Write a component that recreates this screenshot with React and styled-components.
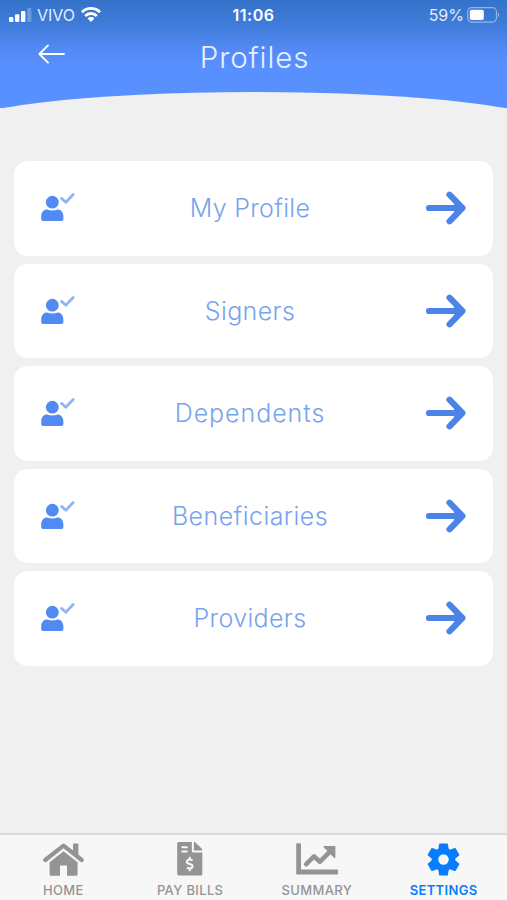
import React from 'react';
import styled, { createGlobalStyle } from 'styled-components';
import { FaFileInvoiceDollar } from 'react-icons/fa';

const profiles = [
    {label: 'My Profile', tracking: 0.3},
    {label: 'Signers', tracking: 0.4},
    {label: 'Dependents', tracking: 0.95},
    {label: 'Beneficiaries', tracking: 0.45},
    {label: 'Providers', tracking: 0.35},
]

const SignalIcon = () => (
    <svg width="23" height="14" viewBox="0 0 23 14" fill="#fff">
        <rect x="0" y="9" width="4.4" height="5" rx="1"/>
        <rect x="6" y="6.2" width="4.4" height="7.8" rx="1"/>
        <rect x="12" y="3" width="4.4" height="11" rx="1"/>
        <rect x="18.2" y="0" width="4.2" height="14" rx="1" opacity="0.25"/>
    </svg>
)

const WifiIcon = () => (
    <svg width="20" height="15" viewBox="0 0 20 15" fill="none" stroke="#fff" strokeWidth="2.8">
        <path d="M1 5.2C6 0.2 14 0.2 19 5.2"/>
        <path d="M4.2 8.9C7.4 5.7 12.6 5.7 15.8 8.9"/>
        <path d="M6.6 11.5C8.6 9.6 11.4 9.6 13.4 11.5L10 14.9Z" fill="#fff" stroke="none"/>
    </svg>
)

const BatteryIcon = () => (
    <svg width="33" height="16" viewBox="0 0 33 16">
        <rect x="0.7" y="0.7" width="28.8" height="14.4" rx="4" fill="none" stroke="#fff" strokeOpacity="0.45" strokeWidth="1.2"/>
        <rect x="2.8" y="2.8" width="14" height="10.2" rx="1.8" fill="#fff"/>
        <path d="M31 5.6C32.6 6.4 32.6 9.4 31 10.2Z" fill="#fff" opacity="0.5"/>
    </svg>
)

const BackIcon = () => (
    <svg width="28" height="20" viewBox="0 0 28 20" fill="none" stroke="#fff" strokeWidth="1.9" strokeLinecap="round" strokeLinejoin="round">
        <path d="M26 10H1.5M10 1.4L1.4 10L10 18.6"/>
    </svg>
)

const UserIcon = () => (
    <svg width="34" height="30" viewBox="0 0 34 30">
        <circle cx="11.3" cy="9.2" r="6.4" fill="#508af2"/>
        <path d="M0.2 23.8C0.2 19.2 2.6 16.6 6.2 16.6C9 17.8 13.6 17.8 16.4 16.6C20 16.6 22.4 19.2 22.4 23.8V25.4C22.4 27.2 21.6 28.1 19.8 28.1H2.8C1 28.1 0.2 27.2 0.2 25.4Z" fill="#508af2"/>
        <path d="M20.6 5.4L24.8 9.2L32.2 1.6" fill="none" stroke="#92b5f6" strokeWidth="2.8" strokeLinecap="round" strokeLinejoin="round"/>
    </svg>
)

const ArrowIcon = () => (
    <svg width="42" height="34" viewBox="0 0 42 34" fill="none" stroke="#4b84e6" strokeWidth="6.2" strokeLinecap="round" strokeLinejoin="round">
        <path d="M4 17H37M24.5 3.7L37.4 17L24.5 30.3"/>
        <path d="M30 13L36 17L30 21Z" fill="#4b84e6" strokeWidth="1"/>
    </svg>
)

const HomeIcon = () => (
    <svg width="41" height="33" viewBox="0 0 41 33" fill="currentColor">
        <path d="M30 0.6H35.4V13L30 8.5Z"/>
        <path d="M2.3 17L20.5 2.6L38.7 17" fill="none" stroke="currentColor" strokeWidth="4.2" strokeLinecap="round" strokeLinejoin="round"/>
        <path d="M6.6 19.3L20.5 8.2L34.6 19.3V31.2Q34.6 32.7 33.1 32.7H24V22.6H17V32.7H8.1Q6.6 32.7 6.6 31.2Z"/>
    </svg>
)

const SummaryIcon = () => (
    <svg width="42" height="32" viewBox="0 0 42 32" fill="currentColor">
        <path d="M1 0.3H4.2Q5 0.3 5 1.1V26.4H41.2Q42 26.4 42 27.2V30.7Q42 31.5 41.2 31.5H1Q0.2 31.5 0.2 30.7V1.1Q0.2 0.3 1 0.3Z"/>
        <path d="M10.2 21.2L18 13.4L23.8 18.8L34.5 8.2" fill="none" stroke="currentColor" strokeWidth="4.6" strokeLinecap="round" strokeLinejoin="round"/>
        <path d="M28.2 3.8H38.6V14.2Z" stroke="currentColor" strokeWidth="1.6" strokeLinejoin="round"/>
    </svg>
)

const SettingsIcon = () => (
    <svg width="33" height="33" viewBox="-16.5 -16.5 33 33" fill="currentColor">
        {[0, 60, 120].map((angle) => (
            <path key={angle} transform={`rotate(${angle})`} d="M-3.6 -16.1H3.6Q4.2 -16.1 4.4 -15.4L5.4 -9V9L4.4 15.4Q4.2 16.1 3.6 16.1H-3.6Q-4.2 16.1 -4.4 15.4L-5.4 9V-9L-4.4 -15.4Q-4.2 -16.1 -3.6 -16.1Z"/>
        ))}
        <circle r="11.8"/>
        <circle r="5.2" fill="#f7f7f7"/>
    </svg>
)

const tabs = [
    {label: 'HOME', icon: <HomeIcon/>},
    {label: 'PAY BILLS', icon: <FaFileInvoiceDollar size={33.5}/>},
    {label: 'SUMMARY', icon: <SummaryIcon/>},
    {label: 'SETTINGS', icon: <SettingsIcon/>, active: true},
]

const App = () => {
    return (
        <>
            <GlobalStyle/>
            <Screen>
                <Header>
                    <StatusBar>
                        <Carrier><SignalIcon/><span>VIVO</span><WifiIcon/></Carrier>
                        <Clock>11:06</Clock>
                        <Battery><span>59%</span><BatteryIcon/></Battery>
                    </StatusBar>
                    <TitleBar>
                        <BackButton aria-label="Back"><BackIcon/></BackButton>
                        <Title>Profiles</Title>
                    </TitleBar>
                </Header>
                <List>
                    {profiles.map(({label, tracking}) => (
                        <Card key={label}>
                            <UserIcon/>
                            <Label $tracking={tracking}>{label}</Label>
                            <ArrowIcon/>
                        </Card>
                    ))}
                </List>
                <TabBar>
                    {tabs.map(({label, icon, active}) => (
                        <Tab key={label} $active={active}>
                            <TabIcon>{icon}</TabIcon>
                            {label}
                        </Tab>
                    ))}
                </TabBar>
            </Screen>
        </>
    )
}

export default App;

const GlobalStyle = createGlobalStyle`
  * {
    box-sizing: border-box;
  }
  body {
    margin: 0;
    font-family: Inter, "Liberation Sans", sans-serif;
  }
  svg {
    display: block;
    flex-shrink: 0;
  }
`;

const Screen = styled.div`
  display: flex;
  flex-direction: column;
  height: 900px;
  overflow: hidden;
  background: #f0f0f0;
`;

const Header = styled.header`
  position: relative;
  height: 108px;
  overflow: hidden;
  color: #fff;
  background: linear-gradient(#3572ca 0, #3f7bd9 24px, #5289f4 48px, #5990ff 66px);

  /* rounded top of the page body */
  &::after {
    content: '';
    position: absolute;
    top: 91.5px;
    left: calc(50% - 300px);
    width: 600px;
    height: 71px;
    border-radius: 50%;
    background: #f0f0f0;
  }
`;

const StatusBar = styled.div`
  display: grid;
  grid-template-columns: 1fr auto 1fr;
  align-items: center;
  height: 29px;
  padding: 0 7px 0 9px;
  font-size: 16px;
`;

const Carrier = styled.div`
  display: flex;
  align-items: center;
  color: #e3ecfa;
  span {
    margin: 0 6px 0 5px;
  }
`;

const Clock = styled.div`
  margin-right: 2px;
  font-weight: 600;
  letter-spacing: 0.5px;
`;

const Battery = styled.div`
  display: flex;
  align-items: center;
  justify-content: flex-end;
  gap: 3px;
  color: #e3ecfa;
`;

const TitleBar = styled.div`
  display: grid;
  grid-template-columns: 66px 1fr 66px;
  align-items: center;
  height: 56px;
`;

const BackButton = styled.button`
  margin: -7px 0 0 38px;
  padding: 0;
  border: 0;
  background: none;
`;

const Title = styled.h1`
  margin: 0;
  padding-left: 2px;
  color: #e8f0ff;
  font-size: 29.5px;
  font-weight: 300;
  letter-spacing: 0.9px;
  text-align: center;
`;

const List = styled.main`
  display: flex;
  flex: 1;
  flex-direction: column;
  gap: 8.1px;
  padding: 53.3px 14px 0;
`;

const Card = styled.div`
  display: grid;
  grid-template-columns: 34px 1fr 42px;
  align-items: center;
  height: 94.4px;
  padding: 0 26px 0 27px;
  border-radius: 14px;
  background: #fff;
`;

const Label = styled.span`
  color: #78a3ee;
  font-size: 25px;
  font-weight: 300;
  letter-spacing: ${({$tracking}) => $tracking}px;
  text-align: center;
`;

const TabBar = styled.nav`
  display: grid;
  grid-template-columns: repeat(4, 1fr);
  height: 67px;
  border-top: 2px solid #d8d8d8;
  background: #f7f7f7;
`;

const Tab = styled.div`
  display: flex;
  flex-direction: column;
  align-items: center;
  padding-top: 6px;
  color: ${({$active}) => $active ? '#087cff' : '#949494'};
  font-size: 13px;
  font-weight: ${({$active}) => $active ? 600 : 500};
  line-height: 16px;
  letter-spacing: 0.35px;
`;

const TabIcon = styled.div`
  display: flex;
  align-items: center;
  height: 36px;
  margin-bottom: 5px;
`;
